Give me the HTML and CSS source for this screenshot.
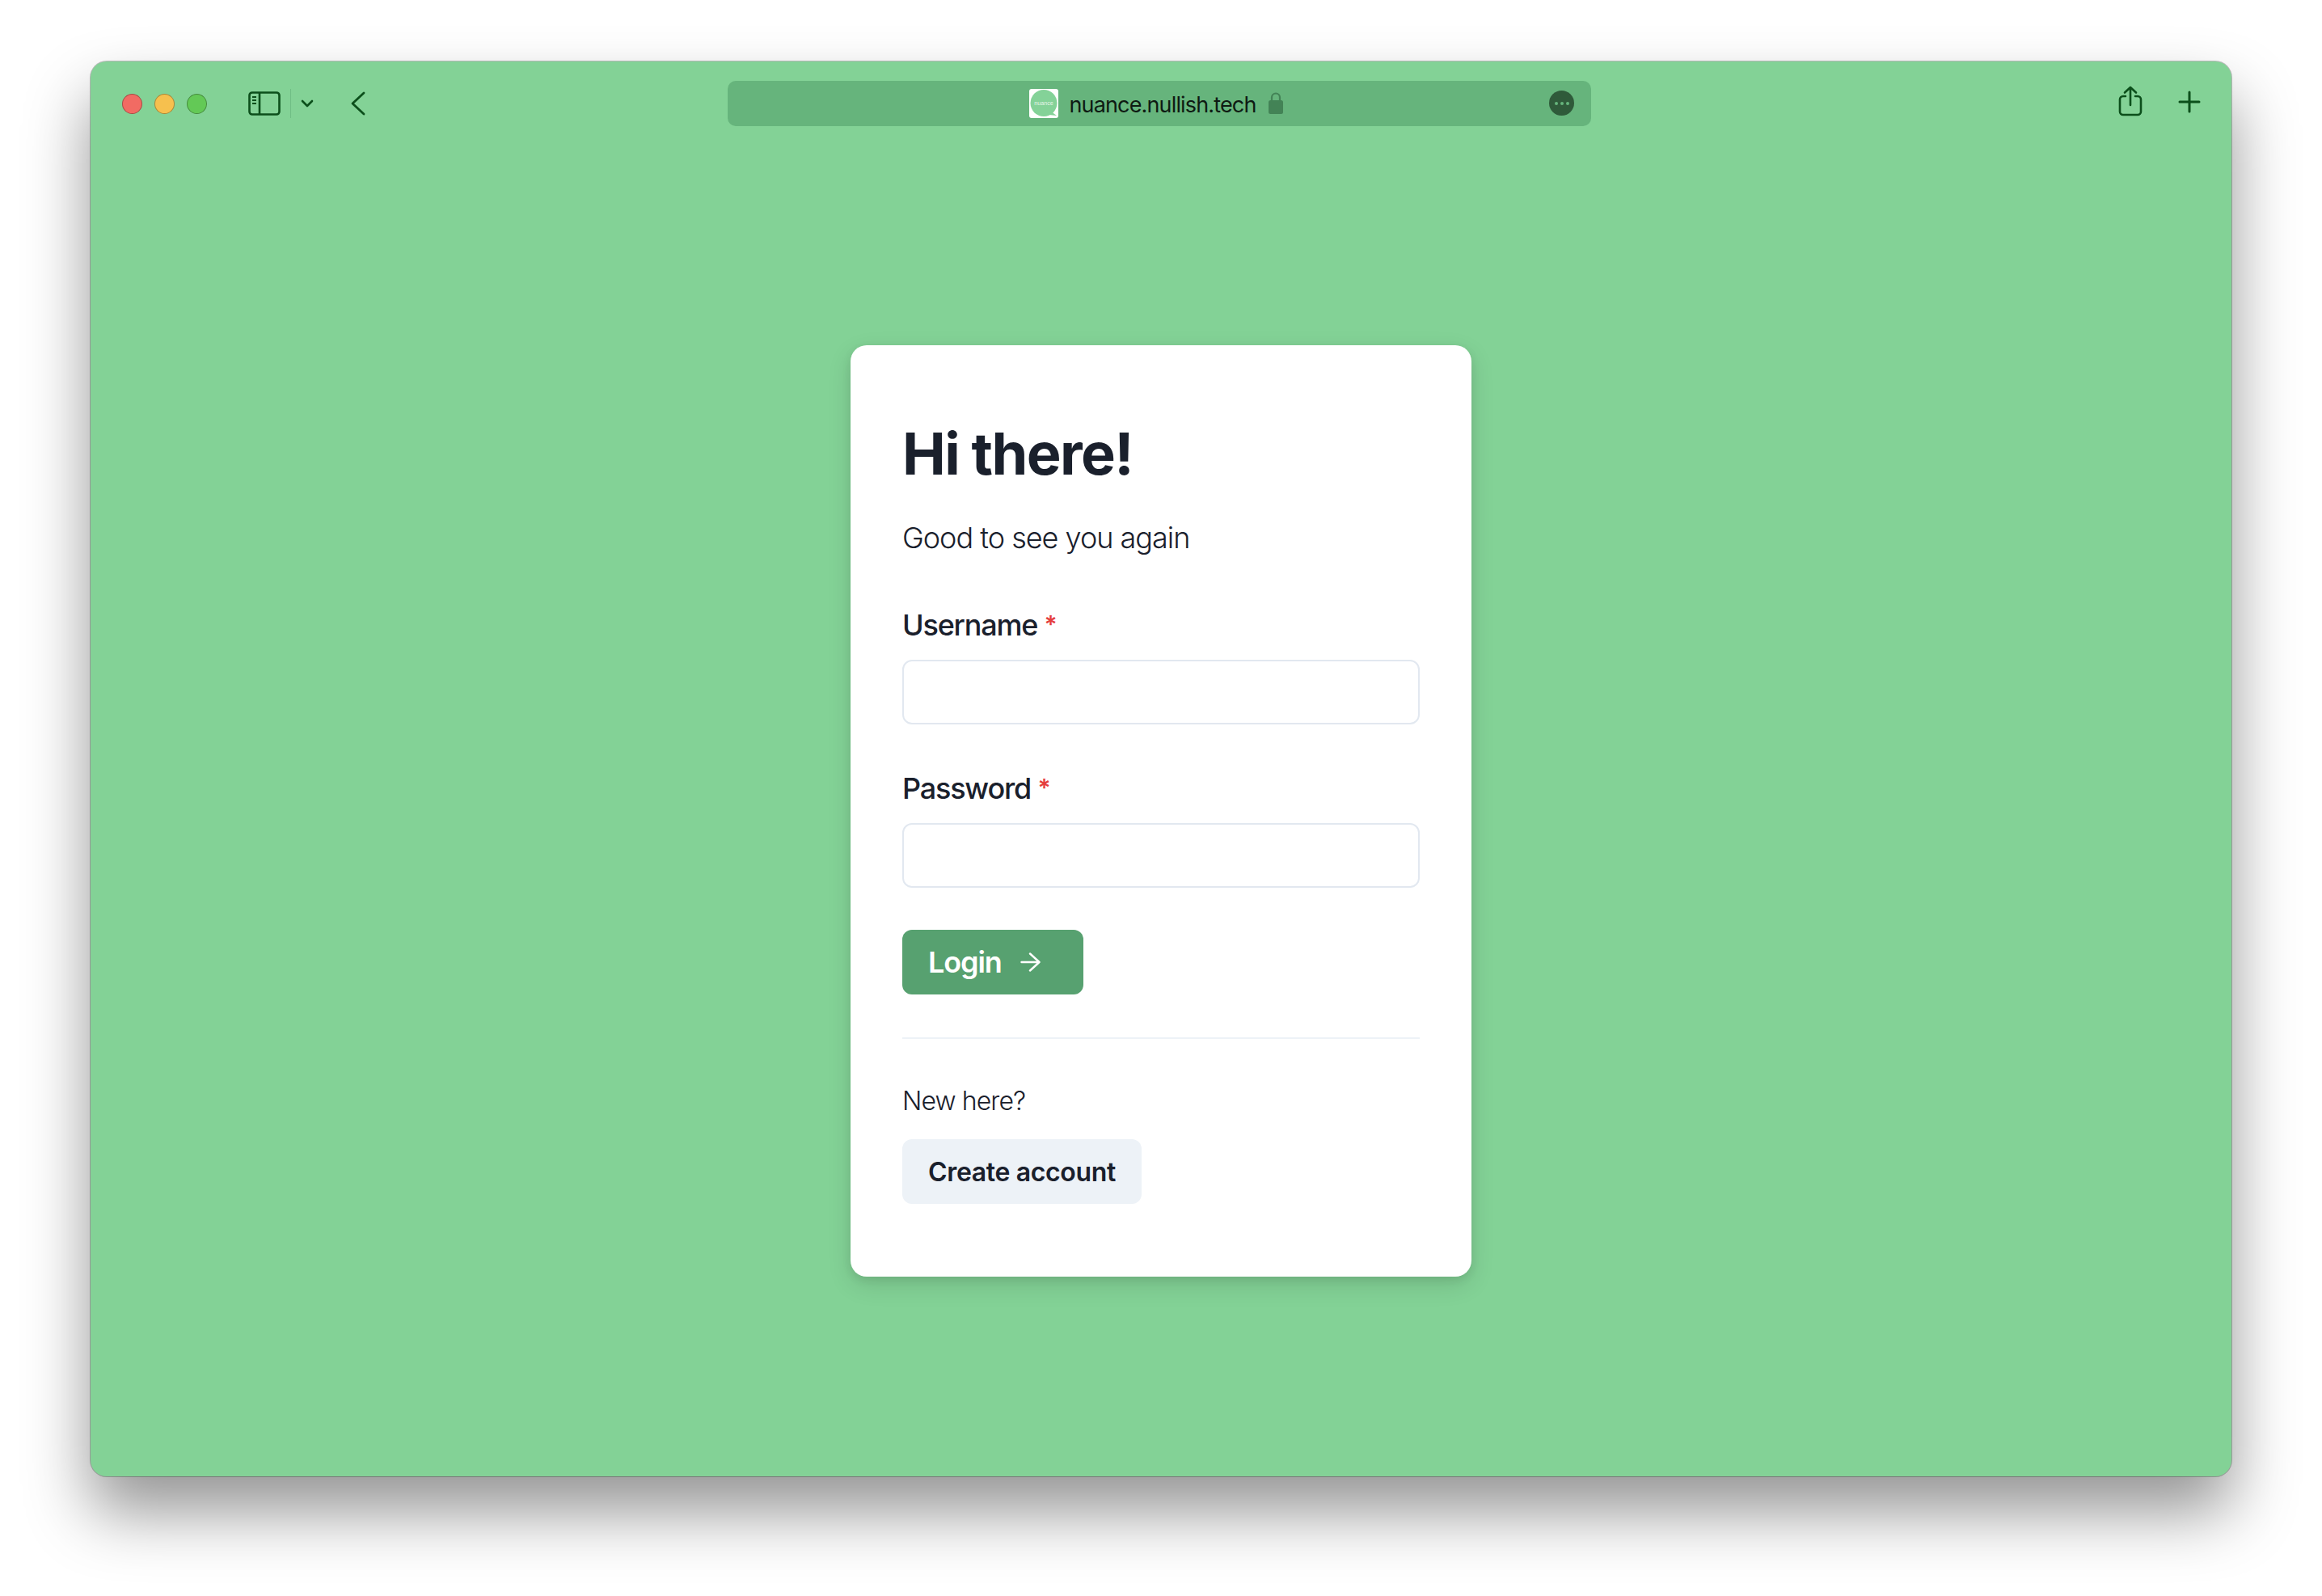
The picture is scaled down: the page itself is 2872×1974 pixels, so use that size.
FILE: index.html
```html
<!DOCTYPE html>
<html lang="en">
  <head>
    <meta charset="UTF-8" />
    <title>Nuance</title>
    <link rel="stylesheet" href="styles.css">
  </head>
  <body>
    <div class="window">
      <div class="toolbar">
        <div class="toolbar-left">
          <div class="lights">
            <span class="light red"></span>
            <span class="light yellow"></span>
            <span class="light green"></span>
          </div>
          <svg class="icon-sidebar" width="40" height="30" viewBox="0 0 40 30" fill="none" stroke="#0c4f1b" stroke-width="2.6">
            <rect x="1.5" y="1.5" width="37" height="27" rx="3.5" />
            <path d="M14 1.5v27" />
            <path d="M5 7h5M5 11h5M5 15h5" stroke-width="2" />
          </svg>
          <span class="divider-v"></span>
          <svg class="icon-chevron" width="16" height="11" viewBox="0 0 16 11" fill="none" stroke="#0c4f1b" stroke-width="2.6" stroke-linecap="round" stroke-linejoin="round">
            <path d="M2 2l6 6 6-6" />
          </svg>
          <svg class="icon-back" width="18" height="30" viewBox="0 0 18 30" fill="none" stroke="#0c4f1b" stroke-width="2.8" stroke-linecap="round" stroke-linejoin="round">
            <path d="M16 2L2 15l14 13" />
          </svg>
        </div>
        <div class="url-bar">
          <div class="url-center">
            <svg class="favicon" width="36" height="36" viewBox="0 0 36 36">
              <rect width="36" height="36" rx="3" fill="#fff" />
              <circle cx="18" cy="17.500" r="16.500" fill="#84d298" />
              <path d="M27 28l7 5-10-1z" fill="#84d298" />
              <text x="18" y="20" text-anchor="middle" font-size="7.200" fill="#fff" fill-opacity="0.8">nuance</text>
            </svg>
            <span class="url-text">nuance.nullish.tech</span>
            <svg class="icon-lock" width="18" height="28" viewBox="0 0 18 28">
              <path d="M4 12V7.500a5 5 0 0 1 10 0V12" fill="none" stroke="#438356" stroke-width="2.200" />
              <rect y="11" width="18" height="17" rx="2.500" fill="#438356" />
            </svg>
          </div>
          <span class="more-button"><i></i><i></i><i></i></span>
        </div>
        <div class="toolbar-right">
          <svg class="icon-share" width="30" height="38" viewBox="0 0 30 38" fill="none" stroke="#0c4f1b" stroke-width="2.600" stroke-linecap="round" stroke-linejoin="round">
            <path d="M9 13H6a4 4 0 0 0-4 4v15a4 4 0 0 0 4 4h18a4 4 0 0 0 4-4V17a4 4 0 0 0-4-4h-3" />
            <path d="M15 24V2M8 8.500L15 2l7 6.500" />
          </svg>
          <svg class="icon-plus" width="28" height="28" viewBox="0 0 28 28" fill="none" stroke="#0c4f1b" stroke-width="3" stroke-linecap="round">
            <path d="M14 2v24M2 14h24" />
          </svg>
        </div>
      </div>

      <div class="main">
        <div class="card">
          <h1>Hi there!</h1>
          <p class="subtitle">Good to see you again</p>

          <div class="field">
            <label for="username">Username <span class="required">*</span></label>
            <input type="text" id="username" />
          </div>
          <div class="field">
            <label for="password">Password <span class="required">*</span></label>
            <input type="password" id="password" />
          </div>

          <button class="btn btn-login">
            Login
            <svg width="26" height="24" viewBox="0 0 26 24" fill="none" stroke="#fff" stroke-width="2.400" stroke-linecap="round" stroke-linejoin="round">
              <path d="M1.500 12h22M12 1.500L23.500 12 12 22.500" />
            </svg>
          </button>

          <hr class="separator" />

          <p class="new-here">New here?</p>
          <button class="btn btn-create">Create account</button>
        </div>
      </div>
    </div>
  </body>
</html>
```

FILE: styles.css
```css
* {
  box-sizing: border-box;
  margin: 0;
  padding: 0;
  font-family: Inter, "Liberation Sans", sans-serif;
}

body {
  width: 2872px;
  height: 1974px;
  padding: 76px 112px 148px;
  background-color: #fff;
  overflow: hidden;
}

.window {
  display: flex;
  flex-direction: column;
  height: 1750px;
  background-color: #83d296;
  border-radius: 20px;
  box-shadow: 0 0 0 1px rgba(0, 0, 0, 0.25), 0 44px 80px rgba(0, 0, 0, 0.42);
}

.toolbar {
  display: flex;
  align-items: center;
  height: 104px;
}

.toolbar-left {
  display: flex;
  align-items: center;
  width: 788px;
  padding-left: 39px;
}

.lights {
  display: flex;
  gap: 15px;
  margin-right: 51px;
}

.light {
  width: 25px;
  height: 25px;
  border-radius: 50%;
  border: 1px solid rgba(0, 0, 0, 0.3);
}

.light.red {
  background-color: #f16b63;
}

.light.yellow {
  background-color: #f6c04e;
}

.light.green {
  background-color: #63c956;
}

.divider-v {
  width: 1px;
  height: 36px;
  margin: 0 12px;
  background-color: #6fbd85;
}

.icon-chevron {
  margin-right: 46px;
}

.url-bar {
  display: flex;
  align-items: center;
  position: relative;
  justify-content: center;
  width: 1068px;
  height: 56px;
  background-color: #66b47c;
  border-radius: 10px;
}

.url-center {
  display: flex;
  align-items: center;
  margin-left: -8px;
}

.favicon {
  margin-right: 13px;
}

.favicon text {
  font-family: "Liberation Sans", sans-serif;
}

.url-text {
  margin-top: 3px;
  font-size: 27px;
  letter-spacing: -0.85px;
  color: #0e1a12;
}

.icon-lock {
  margin-left: 15px;
  margin-top: -2px;
}

.more-button {
  position: absolute;
  top: 12px;
  right: 21px;
  display: flex;
  align-items: center;
  justify-content: center;
  gap: 3px;
  width: 31px;
  height: 31px;
  background-color: #2f5a3a;
  border-radius: 50%;
}

.more-button i {
  width: 4px;
  height: 4px;
  background-color: #66b47c;
  border-radius: 50%;
}

.toolbar-right {
  display: flex;
  flex: 1;
  align-items: center;
  justify-content: flex-end;
  gap: 44px;
  padding-right: 38px;
}

.icon-share {
  margin-top: -6px;
}

.icon-plus {
  margin-top: -4px;
}

.main {
  display: flex;
  flex: 1;
  align-items: center;
  justify-content: center;
}

.card {
  width: 768px;
  padding: 90px 64px;
  background-color: #fff;
  border-radius: 20px;
  box-shadow: 0 10px 30px rgba(0, 0, 0, 0.12), 0 4px 12px rgba(0, 0, 0, 0.08);
  color: #1a202c;
}

.card h1 {
  font-size: 72px;
  font-weight: 700;
  line-height: 88px;
  letter-spacing: -1.6px;
}

.subtitle {
  margin-top: 36px;
  font-size: 36px;
  font-weight: 300;
  line-height: 48px;
  letter-spacing: -1px;
}

.field {
  margin-top: 60px;
}

.field + .field {
  margin-top: 55px;
}

.field label {
  display: block;
  margin-bottom: 19px;
  font-size: 36px;
  font-weight: 500;
  line-height: 48px;
  letter-spacing: -1.2px;
}

.required {
  position: relative;
  top: -3px;
  font-size: 30px;
  font-weight: 600;
  line-height: 0;
  color: #e53e3e;
}

.field input {
  display: block;
  width: 100%;
  height: 80px;
  border: 2px solid #e2e8f0;
  border-radius: 12px;
  background-color: #fff;
}

.btn {
  display: flex;
  align-items: center;
  height: 80px;
  padding: 0 32px;
  border: none;
  border-radius: 12px;
  font-size: 32px;
  font-weight: 600;
}

.btn-login {
  gap: 23px;
  width: 224px;
  margin-top: 52px;
  font-size: 36px;
  font-weight: 600;
  letter-spacing: -1.1px;
  color: #fff;
  background-color: #57a170;
}

.separator {
  height: 2px;
  margin-top: 53px;
  border: none;
  background-color: #edf2f7;
}

.new-here {
  margin-top: 55px;
  font-size: 32px;
  font-weight: 300;
  line-height: 44px;
  letter-spacing: -0.9px;
}

.btn-create {
  margin-top: 25px;
  letter-spacing: -0.35px;
  color: #1a202c;
  background-color: #edf2f7;
}
```
